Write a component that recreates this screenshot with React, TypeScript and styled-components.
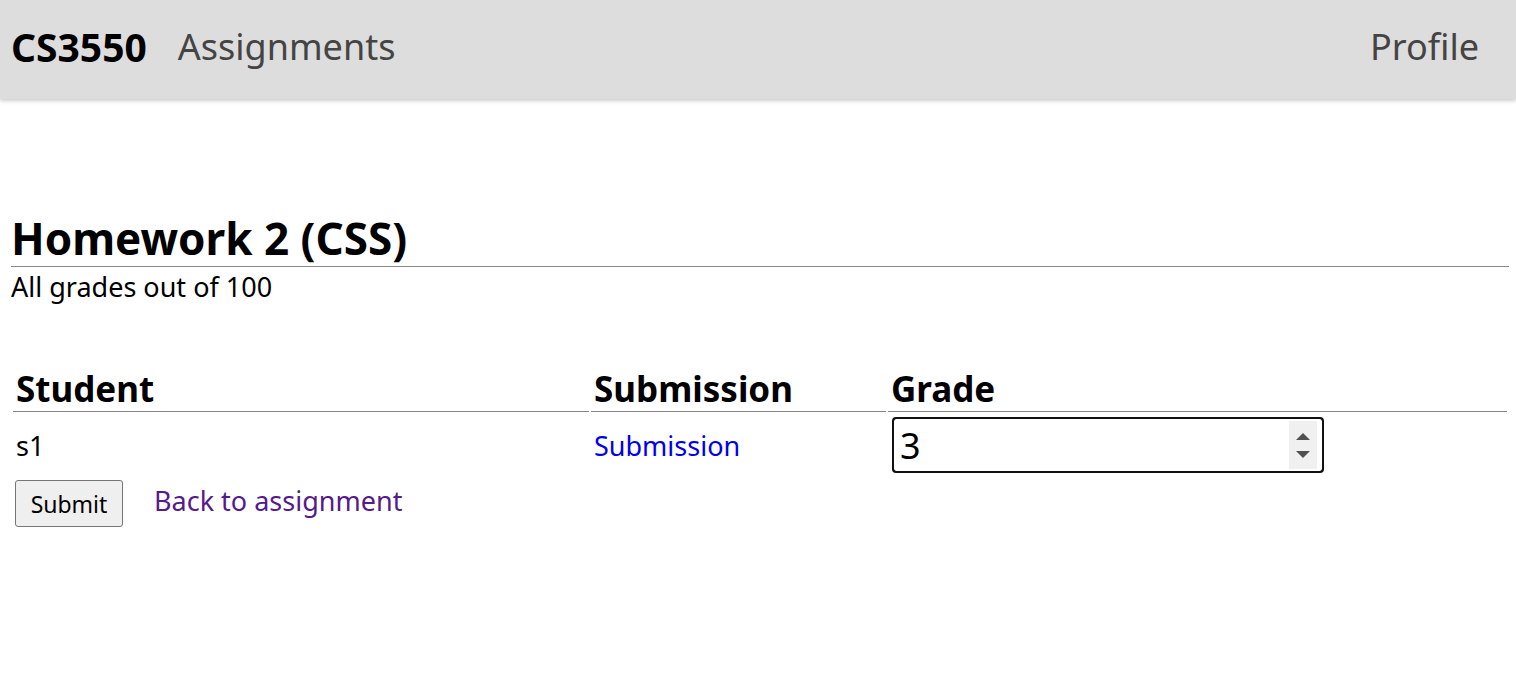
import React from 'react';
import styled, { createGlobalStyle } from 'styled-components';

const GlobalStyle = createGlobalStyle`
  body {
    margin: 0;
    font-family: "Noto Sans", "Open Sans", sans-serif;
    font-size: 27px;
    color: #000;
    background: #fff;
  }
`;

const NavBar = styled.header`
  height: 99px;
  background-color: #dddddd;
  box-shadow: 0 2px 4px rgba(0, 0, 0, 0.2);
  display: flex;
  align-items: center;
  padding: 0 37px 6px 11px;
  box-sizing: border-box;
`;

const Brand = styled.a`
  font-weight: 700;
  font-size: 39px;
  color: #000;
  text-decoration: none;
  margin-right: 31px;
`;

const NavLink = styled.a<{ $push?: boolean }>`
  font-size: 36px;
  color: #444;
  text-decoration: none;
  margin-left: ${(p) => (p.$push ? 'auto' : '0')};
`;

const Main = styled.main`
  padding: 113px 7px 0 11px;
`;

const Title = styled.h1`
  font-size: 44px;
  font-weight: 700;
  line-height: 52px;
  margin: 0;
  padding-bottom: 2px;
  border-bottom: 1px solid #888;
`;

const Subtitle = styled.p`
  margin: 2px 0 0;
  font-size: 27px;
  line-height: 36px;
`;

const GradeTable = styled.table`
  width: 100%;
  margin-top: 60px;
  border-spacing: 2px;
  table-layout: fixed;
`;

const HeadCell = styled.th<{ $width?: number }>`
  text-align: left;
  font-size: 35px;
  font-weight: 700;
  line-height: 44px;
  padding: 0 3px;
  border-bottom: 1px solid #888;
  width: ${(p) => (p.$width ? `${p.$width}px` : 'auto')};
`;

const Cell = styled.td`
  padding: 3px 3px 2px;
  font-size: 27px;
  vertical-align: middle;
`;

const SubmissionLink = styled.a`
  color: #0000ee;
  text-decoration: none;
`;

const InputWrap = styled.span`
  position: relative;
  display: inline-block;
  margin-left: 1px;
`;

const GradeInput = styled.input`
  display: block;
  width: 432px;
  height: 56px;
  box-sizing: border-box;
  border: 2px solid #111;
  border-radius: 4px;
  font-family: "Noto Sans", "Open Sans", sans-serif;
  font-size: 36px;
  padding: 0 40px 0 6px;
  margin: 0;
  outline: 1px solid #111;
  outline-offset: -2px;
  -moz-appearance: textfield;

  &::-webkit-inner-spin-button,
  &::-webkit-outer-spin-button {
    -webkit-appearance: none;
    margin: 0;
  }
`;

const Spinner = styled.span`
  position: absolute;
  top: 4px;
  bottom: 4px;
  right: 7px;
  width: 28px;
  background: #f0f0f0;
  display: flex;
  flex-direction: column;
  align-items: center;
  justify-content: space-around;
  padding: 6px 0;
  box-sizing: border-box;
`;

const Actions = styled.div`
  display: flex;
  align-items: center;
  gap: 31px;
  padding-left: 4px;
  margin-top: 3px;
`;

const SubmitButton = styled.button`
  font-family: "Noto Sans", "Open Sans", sans-serif;
  font-size: 23px;
  height: 47px;
  width: 108px;
  padding: 0;
  background: #efefef;
  border: 1px solid #767676;
  border-radius: 3px;
  color: #000;
`;

const BackLink = styled.a`
  color: #551a8b;
  text-decoration: none;
  font-size: 27px;
  margin-top: -7px;
`;

export default function App() {
  return (
    <>
      <GlobalStyle />
      <NavBar>
        <Brand href="#">CS3550</Brand>
        <NavLink href="#">Assignments</NavLink>
        <NavLink href="#" $push>Profile</NavLink>
      </NavBar>
      <Main>
        <Title>Homework 2 (CSS)</Title>
        <Subtitle>All grades out of 100</Subtitle>
        <form onSubmit={(e) => e.preventDefault()}>
          <GradeTable>
            <thead>
              <tr>
                <HeadCell $width={570}>Student</HeadCell>
                <HeadCell $width={289}>Submission</HeadCell>
                <HeadCell>Grade</HeadCell>
              </tr>
            </thead>
            <tbody>
              <tr>
                <Cell>s1</Cell>
                <Cell>
                  <SubmissionLink href="#">Submission</SubmissionLink>
                </Cell>
                <Cell>
                  <InputWrap>
                    <GradeInput type="number" defaultValue={3} />
                    <Spinner aria-hidden>
                      <svg width="14" height="7" viewBox="0 0 14 7">
                        <path d="M7 0 L14 7 L0 7 Z" fill="#505050" />
                      </svg>
                      <svg width="14" height="7" viewBox="0 0 14 7">
                        <path d="M0 0 L14 0 L7 7 Z" fill="#505050" />
                      </svg>
                    </Spinner>
                  </InputWrap>
                </Cell>
              </tr>
            </tbody>
          </GradeTable>
          <Actions>
            <SubmitButton type="submit">Submit</SubmitButton>
            <BackLink href="#">Back to assignment</BackLink>
          </Actions>
        </form>
      </Main>
    </>
  );
}
